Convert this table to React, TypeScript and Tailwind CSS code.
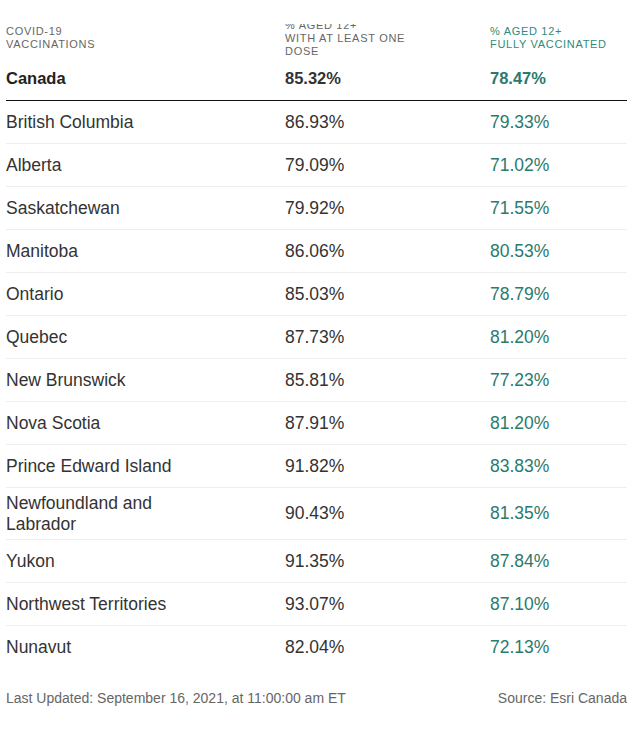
const rows: [string, string, string][] = [
  ["British Columbia", "86.93%", "79.33%"],
  ["Alberta", "79.09%", "71.02%"],
  ["Saskatchewan", "79.92%", "71.55%"],
  ["Manitoba", "86.06%", "80.53%"],
  ["Ontario", "85.03%", "78.79%"],
  ["Quebec", "87.73%", "81.20%"],
  ["New Brunswick", "85.81%", "77.23%"],
  ["Nova Scotia", "87.91%", "81.20%"],
  ["Prince Edward Island", "91.82%", "83.83%"],
  ["Newfoundland and\nLabrador", "90.43%", "81.35%"],
  ["Yukon", "91.35%", "87.84%"],
  ["Northwest Territories", "93.07%", "87.10%"],
  ["Nunavut", "82.04%", "72.13%"],
];

const cols = "grid grid-cols-[279px_205px_1fr]";

export default function App() {
  return (
    <div className="w-[640px] h-[729px] bg-white pt-[24px] px-[6px] font-['Liberation_Sans',Arial,sans-serif] text-[#333]">
      <div className="w-[621px] overflow-hidden">
        {/* header, the middle label spills over the top edge and gets cut */}
        <div className={`${cols} grid-rows-[28px] items-center text-[11px] leading-[13px] uppercase tracking-[0.7px] text-[#666]`}>
          <div>
            COVID-19
            <br />
            Vaccinations
          </div>
          <div>
            % Aged 12+
            <br />
            With at least one
            <br />
            dose
          </div>
          <div className="text-[#2f8a7b]">
            % Aged 12+
            <br />
            Fully vaccinated
          </div>
        </div>

        {/* national total */}
        <div className={`${cols} pt-[16px] pb-[11px] text-[16.5px] leading-[21px] font-bold border-b border-[#111]`}>
          <div className="text-[#222]">Canada</div>
          <div>85.32%</div>
          <div className="text-[#2a7a6d]">78.47%</div>
        </div>

        {rows.map(([name, one, full], i) => (
          <div
            key={name}
            className={`${cols} items-center min-h-[43px] py-[4.5px] text-[17.5px] leading-[21px] ${
              i < rows.length - 1 ? "border-b border-[#eee]" : ""
            }`}
          >
            <div className="whitespace-pre-line">{name}</div>
            <div>{one}</div>
            <div className="text-[#2a7a6d]">{full}</div>
          </div>
        ))}

        <div className="flex justify-between mt-[21px] text-[14px] leading-[16px] text-[#666]">
          <span>Last Updated: September 16, 2021, at 11:00:00 am ET</span>
          <span>Source: Esri Canada</span>
        </div>
      </div>
    </div>
  );
}
